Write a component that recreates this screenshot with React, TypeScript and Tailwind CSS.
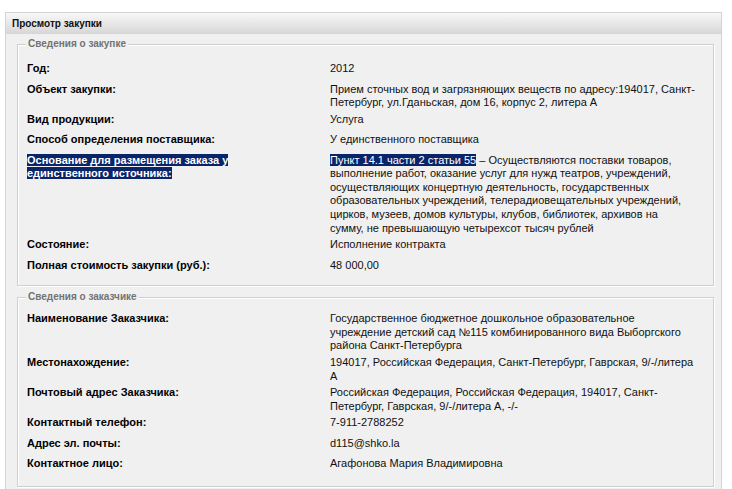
import type { ReactNode } from 'react';

type Row = { label: ReactNode; value: ReactNode };

const Hl = ({ children }: { children: ReactNode }) => (
  <span className="bg-[#0a246a] text-white">{children}</span>
);

const Lines = ({ lines }: { lines: ReactNode[] }) => (
  <>
    {lines.map((l, i) => (
      <div key={i} className="whitespace-nowrap">
        {l}
      </div>
    ))}
  </>
);

const purchase: Row[] = [
  { label: 'Год:', value: '2012' },
  {
    label: 'Объект закупки:',
    value: (
      <Lines
        lines={[
          'Прием сточных вод и загрязняющих веществ по адресу:194017, Санкт-',
          'Петербург, ул.Гданьская, дом 16, корпус 2, литера А',
        ]}
      />
    ),
  },
  { label: 'Вид продукции:', value: 'Услуга' },
  { label: 'Способ определения поставщика:', value: 'У единственного поставщика' },
  {
    label: (
      <Lines
        lines={[
          <Hl>Основание для размещения заказа у</Hl>,
          <Hl>единственного источника:</Hl>,
        ]}
      />
    ),
    value: (
      <Lines
        lines={[
          <>
            <Hl>Пункт 14.1 части 2 статьи 55</Hl> – Осуществляются поставки товаров,
          </>,
          'выполнение работ, оказание услуг для нужд театров, учреждений,',
          'осуществляющих концертную деятельность, государственных',
          'образовательных учреждений, телерадиовещательных учреждений,',
          'цирков, музеев, домов культуры, клубов, библиотек, архивов на',
          'сумму, не превышающую четырехсот тысяч рублей',
        ]}
      />
    ),
  },
  { label: 'Состояние:', value: 'Исполнение контракта' },
  { label: 'Полная стоимость закупки (руб.):', value: '48 000,00' },
];

const customer: Row[] = [
  {
    label: 'Наименование Заказчика:',
    value: (
      <Lines
        lines={[
          'Государственное бюджетное дошкольное образовательное',
          'учреждение детский сад №115 комбинированного вида Выборгского',
          'района Санкт-Петербурга',
        ]}
      />
    ),
  },
  {
    label: 'Местонахождение:',
    value: (
      <Lines
        lines={['194017, Российская Федерация, Санкт-Петербург, Гаврская, 9/-/литера', 'А']}
      />
    ),
  },
  {
    label: 'Почтовый адрес Заказчика:',
    value: (
      <Lines
        lines={[
          'Российская Федерация, Российская Федерация, 194017, Санкт-',
          'Петербург, Гаврская, 9/-/литера А, -/-',
        ]}
      />
    ),
  },
  { label: 'Контактный телефон:', value: '7-911-2788252' },
  { label: 'Адрес эл. почты:', value: 'd115@shko.la' },
  { label: 'Контактное лицо:', value: 'Агафонова Мария Владимировна' },
];

const Section = ({
  title,
  rows,
  className,
}: {
  title: string;
  rows: Row[];
  className: string;
}) => (
  <fieldset
    className={`border border-[#cfcfcf] shadow-[1px_1px_0_#ffffff,inset_1px_1px_0_#ffffff] ${className}`}
  >
    <legend className="ml-[8px] px-[2px] text-[10px] leading-[12px] font-bold text-[#737373] bg-[#f0f0f0]">
      {title}
    </legend>
    {rows.map((r, i) => (
      <div key={i} className="flex min-h-[20.5px] pb-[3px] pl-[9px] leading-[13.6px]">
        <div className="w-[303px] shrink-0 text-[11px] font-bold text-black">{r.label}</div>
        <div className="text-[11px] text-[#111]">{r.value}</div>
      </div>
    ))}
  </fieldset>
);

export default function App() {
  return (
    <div className="min-h-screen bg-white pt-[12px] pl-[5px] font-['Liberation_Sans',Arial,sans-serif]">
      <div className="w-[717px] h-[480px] border border-[#d4d4d4] bg-[#f0f0f0]">
        <div className="h-[21px] flex items-center px-[6px] border-b border-[#d6d6d6] bg-gradient-to-b from-[#f8f8f8] to-[#d8d8d8] text-[10px] font-bold text-[#111]">
          Просмотр закупки
        </div>
        <div className="pl-[11px] pr-[7px] pt-[4px]">
          <Section title="Сведения о закупке" rows={purchase} className="pt-[12px] pb-[6px]" />
          <Section title="Сведения о заказчике" rows={customer} className="mt-[5px] pt-[9px] pb-[8px]" />
        </div>
      </div>
    </div>
  );
}
